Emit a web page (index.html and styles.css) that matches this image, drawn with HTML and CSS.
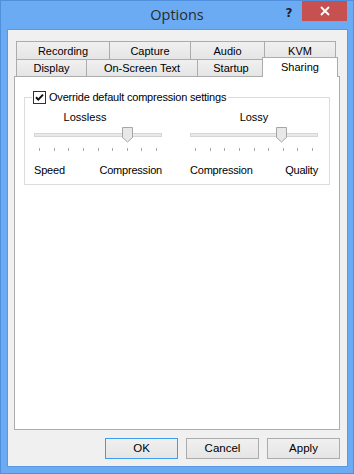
FILE: index.html
```html
<!DOCTYPE html>
<html>
<head>
<meta charset="utf-8">
<link rel="stylesheet" href="styles.css">
</head>
<body>
<div class="window">
  <div class="titlebar">
    <div></div>
    <div class="title">Options</div>
    <div class="controls">
      <div class="help">?</div>
      <div class="close">
        <svg width="10" height="10" viewBox="0 0 10 10"><path d="M1 1 L9 9 M9 1 L1 9" stroke="#fff" stroke-width="1.8" fill="none"/></svg>
      </div>
    </div>
  </div>
  <div class="client">
    <div class="tabrow row1">
      <div class="tab w93">Recording</div>
      <div class="tab w81">Capture</div>
      <div class="tab w74">Audio</div>
      <div class="tab w72 last">KVM</div>
    </div>
    <div class="tabrow row2">
      <div class="tab w70">Display</div>
      <div class="tab w111">On-Screen Text</div>
      <div class="tab w67">Startup</div>
      <div class="tab selected last">Sharing</div>
    </div>
    <div class="panel">
      <div class="group">
        <div class="legend">
          <svg class="checkbox" width="13" height="13" viewBox="0 0 13 13">
            <rect x="0.5" y="0.5" width="12" height="12" fill="#fff" stroke="#333"/>
            <path d="M3 6.2 L5.3 8.6 L10 3.6" stroke="#111" stroke-width="2" fill="none"/>
          </svg>
          <span>Override default compression settings</span>
        </div>
        <div class="sliders">
          <div class="col">
            <div class="slabel left">Lossless</div>
            <div class="slider">
              <div class="track"></div>
              <svg class="thumb" style="left:88px" width="11" height="16" viewBox="0 0 11 16"><path d="M0.5 0.5 H10.5 V10.5 L5.5 15 L0.5 10.5 Z" fill="#e8e8e8" stroke="#a6a6a6"/></svg>
            </div>
            <div class="ticks"><i></i><i></i><i></i><i></i><i></i><i></i><i></i><i></i><i></i></div>
            <div class="ends"><span>Speed</span><span>Compression</span></div>
          </div>
          <div class="col">
            <div class="slabel">Lossy</div>
            <div class="slider">
              <div class="track"></div>
              <svg class="thumb" style="left:86px" width="11" height="16" viewBox="0 0 11 16"><path d="M0.5 0.5 H10.5 V10.5 L5.5 15 L0.5 10.5 Z" fill="#e8e8e8" stroke="#a6a6a6"/></svg>
            </div>
            <div class="ticks"><i></i><i></i><i></i><i></i><i></i><i></i><i></i><i></i><i></i></div>
            <div class="ends"><span>Compression</span><span>Quality</span></div>
          </div>
        </div>
      </div>
    </div>
    <div class="buttons">
      <div class="btn default">OK</div>
      <div class="btn">Cancel</div>
      <div class="btn">Apply</div>
    </div>
  </div>
</div>
</body>
</html>
```

FILE: styles.css
```css
* { box-sizing: border-box; }
html, body { margin: 0; padding: 0; }
body {
  font-family: "Liberation Sans", Arial, sans-serif;
  font-size: 11px;
  color: #000;
  background: #6aabf4;
}
.window {
  width: 354px;
  height: 474px;
  background: #6aabf4;
  border: 1px solid #4f8fdc;
  display: flex;
  flex-direction: column;
}
.titlebar {
  height: 28px;
  display: grid;
  grid-template-columns: 1fr auto 1fr;
  align-items: start;
}
.title {
  font-family: "Open Sans", "Noto Sans", sans-serif;
  font-size: 14.5px;
  line-height: 28px;
  color: #2b2b2b;
}
.controls {
  display: flex;
  justify-content: flex-end;
  margin-right: 6px;
}
.help {
  width: 26px;
  height: 20px;
  text-align: center;
  font-family: "DejaVu Sans", sans-serif;
  font-weight: bold;
  font-size: 12px;
  line-height: 24px;
  color: #222;
}
.close {
  width: 45px;
  height: 20px;
  background: #c75050;
  display: flex;
  align-items: center;
  justify-content: center;
}
.client {
  flex: 1;
  margin: 0 5px 6px 6px;
  border: 1px solid #5a98e2;
  background: #f0f0f0;
  padding: 11px 7px 0 6px;
  display: flex;
  flex-direction: column;
}
.tabrow {
  display: flex;
  margin-left: 2px;
}
.row1 { height: 18px; }
.row2 { height: 17px; }
.tab {
  border: 1px solid #acacac;
  border-right: none;
  border-bottom: none;
  background: linear-gradient(#f0f0f0, #e5e5e5);
  text-align: center;
  white-space: nowrap;
}
.row1 .tab { line-height: 16px; padding-top: 1px; }
.row2 .tab { line-height: 15px; padding-top: 1px; }
.tab.last { border-right: 1px solid #acacac; }
.w93 { width: 93px; }
.w81 { width: 81px; }
.w74 { width: 74px; }
.w72 { width: 72px; }
.w70 { width: 70px; }
.w111 { width: 111px; }
.w67 { width: 67px; }
.tab.selected {
  width: 76px;
  margin: -2px -2px -1px -2px;
  height: 20px;
  background: #fff;
  position: relative;
  z-index: 1;
  line-height: 16px;
  padding-top: 1px;
}
.panel {
  height: 354px;
  background: #fff;
  border: 1px solid #acacac;
  padding: 20px 9px 0 9px;
}
.group {
  position: relative;
  border: 1px solid #dcdcdc;
  padding: 12px 10px 7px 9px;
}
.legend {
  position: absolute;
  top: -7px;
  left: 7px;
  background: #fff;
  padding: 0 2px 0 1px;
  display: flex;
  align-items: center;
  gap: 3px;
  height: 13px;
  line-height: 13px;
  letter-spacing: -0.2px;
}
.checkbox { display: block; }
.sliders {
  display: grid;
  grid-template-columns: 128px 128px;
  column-gap: 28px;
}
.col { display: flex; flex-direction: column; }
.slabel {
  text-align: center;
  line-height: 14px;
  height: 14px;
}
.slabel.left { padding-right: 26px; }
.slider {
  position: relative;
  height: 16px;
  margin-top: 3px;
}
.track {
  position: absolute;
  left: 0;
  right: 0;
  top: 6px;
  height: 4px;
  background: #e7eaea;
  border: 1px solid #d6d6d6;
}
.thumb {
  position: absolute;
  top: 0;
  display: block;
}
.ticks {
  margin-top: 5px;
  height: 3px;
  display: flex;
  justify-content: space-between;
  padding: 0 5px;
}
.ticks i {
  display: block;
  width: 1px;
  height: 3px;
  background: #a8a8a8;
}
.ends {
  margin-top: 12px;
  display: flex;
  justify-content: space-between;
  line-height: 14px;
  letter-spacing: -0.2px;
}
.buttons {
  margin-top: 8px;
  display: flex;
  justify-content: flex-end;
  gap: 8px;
}
.btn {
  width: 73px;
  height: 21px;
  border: 1px solid #acacac;
  background: linear-gradient(#f0f0f0, #e5e5e5);
  text-align: center;
  line-height: 19px;
  font-size: 11.5px;
}
.btn.default { border-color: #3c9ef0; }
```
